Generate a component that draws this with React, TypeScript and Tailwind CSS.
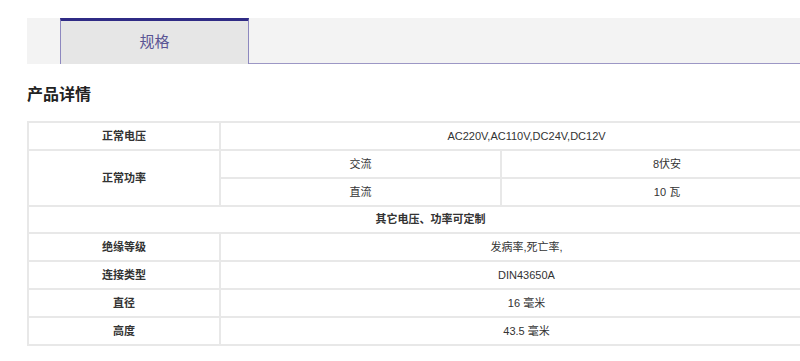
import React from "react";

const font = { fontFamily: '"Liberation Sans", Arial, "Noto Sans CJK SC", sans-serif' };

export default function App() {
  const td = "border-2 border-[#e8e8e8] text-center align-middle p-0 h-[28px]";
  return (
    <div className="w-[800px] h-[361px] overflow-hidden bg-white text-[#333]" style={font}>
      <div className="ml-[27px] w-[807px] pt-[18px]">
        <div className="flex h-[46px] bg-[#f3f3f3]">
          <div className="w-[33px]" />
          <div className="w-[189px] bg-[#e6e6e6] border-t-[3px] border-t-[#2f2b85] border-x border-x-[#8d88bf] flex items-center justify-center text-[15px] text-[#5a5494]">
            规格
          </div>
          <div className="flex-1 border-b border-[#9c97c5]" />
        </div>
        <h2 className="mt-[19px] text-[16px] leading-[24px] font-bold text-[#222]">产品详情</h2>
        <table className="mt-[14px] w-[807px] border-collapse border-2 border-[#e8e8e8] text-[11px] table-fixed">
          <colgroup>
            <col className="w-[192px]" />
            <col className="w-[281px]" />
            <col />
          </colgroup>
          <tbody>
            <tr>
              <td className={`${td} font-bold`}>正常电压</td>
              <td className={td} colSpan={2}>AC220V,AC110V,DC24V,DC12V</td>
            </tr>
            <tr>
              <td className={`${td} font-bold`} rowSpan={2}>正常功率</td>
              <td className={td}>交流</td>
              <td className={td}>8伏安</td>
            </tr>
            <tr>
              <td className={td}>直流</td>
              <td className={td}>10 瓦</td>
            </tr>
            <tr>
              <td className={`${td} !h-[27px] font-bold`} colSpan={3}>其它电压、功率可定制</td>
            </tr>
            <tr>
              <td className={`${td} font-bold`}>绝缘等级</td>
              <td className={td} colSpan={2}>发病率,死亡率,</td>
            </tr>
            <tr>
              <td className={`${td} font-bold`}>连接类型</td>
              <td className={td} colSpan={2}>DIN43650A</td>
            </tr>
            <tr>
              <td className={`${td} font-bold`}>直径</td>
              <td className={td} colSpan={2}>16 毫米</td>
            </tr>
            <tr>
              <td className={`${td} font-bold`}>高度</td>
              <td className={td} colSpan={2}>43.5 毫米</td>
            </tr>
          </tbody>
        </table>
      </div>
    </div>
  );
}
